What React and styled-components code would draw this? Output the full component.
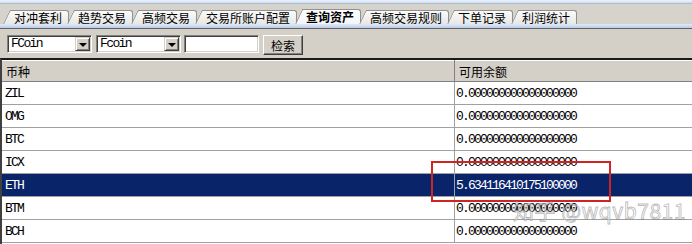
import React from "react";
import styled, { createGlobalStyle } from "styled-components";

const Global = createGlobalStyle`
  html, body { margin: 0; padding: 0; background: #d4d0c8; }
  body { font-family: "Noto Sans CJK SC", "Liberation Sans", sans-serif; font-size: 12px; color: #000; }
`;

const MONO = `"Liberation Mono", "Noto Sans CJK SC", monospace`;

const Frame = styled.div`
  position: relative;
  width: 692px;
  height: 244px;
  overflow: hidden;
  background: #d4d0c8;
  display: flex;
  flex-direction: column;
`;

const TopStrip = styled.div`
  height: 3px;
  background: linear-gradient(#eef3fb, #cfdcee);
  border-bottom: 1px solid #a9bcd8;
`;

const TabBar = styled.div`
  height: 20px;
  display: flex;
  align-items: flex-end;
  padding-left: 5px;
  background: #d6d2cc;
`;

const Tab = styled.div`
  position: relative;
  z-index: 0;
  box-sizing: border-box;
  height: ${(p) => (p.$active ? 15 : 14)}px;
  margin-left: 5px;
  padding: 0 6px 0 4px;
  display: flex;
  align-items: center;
  background: ${(p) => (p.$active ? "linear-gradient(#ffffff, #f3f5f9)" : "linear-gradient(#fbfbfb, #e7e7e5)")};
  border-top: 1px solid #8e9092;
  border-right: 1px solid #8e9092;
  border-top-right-radius: 3px;
  font-size: 12px;
  line-height: 12px;
  font-weight: ${(p) => (p.$active ? 700 : 400)};
  white-space: nowrap;

  &::before {
    content: "";
    position: absolute;
    z-index: -1;
    top: -1px;
    bottom: 0;
    left: -7px;
    width: 12px;
    background: inherit;
    border-top: 1px solid #8e9092;
    border-left: 1px solid #8e9092;
    border-top-left-radius: 2px;
    transform: skewX(-26deg);
    transform-origin: bottom left;
  }
`;

const TabBand = styled.div`
  height: 4px;
  background: linear-gradient(#e3ebf7, #b9cbe6);
  border-bottom: 1px solid #5f6368;
`;

const Toolbar = styled.div`
  height: 29px;
  box-sizing: border-box;
  padding: 6px 0 0 7px;
  display: flex;
  align-items: flex-start;
`;

const Sunken = styled.div`
  box-sizing: border-box;
  height: 18px;
  width: ${(p) => p.$w}px;
  margin-right: ${(p) => p.$gap || 0}px;
  background: #fff;
  border-top: 1px solid #808080;
  border-left: 1px solid #808080;
  border-bottom: 1px solid #ffffff;
  border-right: 1px solid #ffffff;
  box-shadow: inset 1px 1px 0 #404040, inset -1px -1px 0 #d4d0c8;
  display: flex;
  align-items: center;
  padding: 0 1px 0 3px;
`;

const ComboText = styled.span`
  flex: 1;
  font-family: ${MONO};
  font-size: 13px;
  letter-spacing: -1.6px;
  line-height: 14px;
`;

const DropButton = styled.div`
  box-sizing: border-box;
  width: 15px;
  height: 14px;
  background: #d4d0c8;
  border-top: 1px solid #d4d0c8;
  border-left: 1px solid #d4d0c8;
  border-bottom: 1px solid #404040;
  border-right: 1px solid #404040;
  box-shadow: inset 1px 1px 0 #ffffff, inset -1px -1px 0 #808080;
  display: flex;
  align-items: center;
  justify-content: center;

  &::after {
    content: "";
    width: 0;
    height: 0;
    border-left: 4px solid transparent;
    border-right: 4px solid transparent;
    border-top: 4px solid #000;
    margin-top: 1px;
  }
`;

const Button = styled.div`
  box-sizing: border-box;
  width: 40px;
  height: 20px;
  background: #d4d0c8;
  border-top: 1px solid #ffffff;
  border-left: 1px solid #ffffff;
  border-bottom: 1px solid #404040;
  border-right: 1px solid #404040;
  box-shadow: inset -1px -1px 0 #808080;
  display: flex;
  align-items: center;
  justify-content: center;
  font-size: 12px;
`;

const Grid = styled.div`
  flex: 1;
  background: #fff;
  border-top: 2px solid #1a1a1a;
  border-left: 2px solid #404040;
`;

const Row = styled.div`
  display: grid;
  grid-template-columns: 453px 1fr;
  height: ${(p) => (p.$header ? 22 : 23)}px;
  box-sizing: border-box;
  border-bottom: 1px solid ${(p) => (p.$header ? "#808080" : "#a0a0a0")};
  background: ${(p) => (p.$header ? "#d4d0c8" : p.$selected ? "#0a246a" : "#ffffff")};
  color: ${(p) => (p.$selected ? "#ffffff" : "#000000")};
  box-shadow: ${(p) => (p.$header ? "inset 0 1px 0 #ffffff" : "none")};
`;

const Cell = styled.div`
  display: flex;
  align-items: center;
  overflow: hidden;
  white-space: nowrap;
  padding-left: ${(p) => p.$pad}px;
  border-right: ${(p) => (p.$first ? `1px solid ${p.$header ? "#808080" : "#a0a0a0"}` : "none")};
  font-family: ${(p) => (p.$header ? `"Noto Sans CJK SC", sans-serif` : MONO)};
  font-size: ${(p) => (p.$header ? 12 : 13)}px;
  letter-spacing: ${(p) => (p.$header ? "0" : "-1.8px")};
  padding-top: ${(p) => (p.$header ? 1 : 0)}px;
`;

const Highlight = styled.div`
  position: absolute;
  left: 431px;
  top: 161px;
  width: 180px;
  height: 41px;
  box-sizing: border-box;
  border: 2px solid #d02424;
  pointer-events: none;
`;

const Watermark = styled.div`
  position: absolute;
  left: 513px;
  top: 197px;
  font-family: "Noto Sans CJK SC", "Liberation Sans", sans-serif;
  font-size: 21px;
  line-height: 26px;
  color: rgba(255, 255, 255, 0.55);
  -webkit-text-stroke: 0.8px rgba(120, 120, 120, 0.55);
  letter-spacing: 0.5px;
  white-space: nowrap;
  pointer-events: none;
`;

const tabs = ["对冲套利", "趋势交易", "高频交易", "交易所账户配置", "查询资产", "高频交易规则", "下单记录", "利润统计"];

const rows = [
  ["ZIL", "0.000000000000000000"],
  ["OMG", "0.000000000000000000"],
  ["BTC", "0.000000000000000000"],
  ["ICX", "0.000000000000000000"],
  ["ETH", "5.634116410175100000", true],
  ["BTM", "0.000000000000000000"],
  ["BCH", "0.000000000000000000"],
];

export default function App() {
  return (
    <>
      <Global />
      <Frame>
        <TopStrip />
        <TabBar>
          {tabs.map((t) => (
            <Tab key={t} $active={t === "查询资产"}>
              {t}
            </Tab>
          ))}
        </TabBar>
        <TabBand />
        <Toolbar>
          <Sunken $w={85} $gap={4}>
            <ComboText>FCoin</ComboText>
            <DropButton />
          </Sunken>
          <Sunken $w={85} $gap={3}>
            <ComboText>Fcoin</ComboText>
            <DropButton />
          </Sunken>
          <Sunken $w={75} $gap={4} />
          <Button>检索</Button>
        </Toolbar>
        <Grid>
          <Row $header>
            <Cell $header $first $pad={4}>币种</Cell>
            <Cell $header $pad={4}>可用余额</Cell>
          </Row>
          {rows.map(([coin, amt, sel]) => (
            <Row key={coin} $selected={sel}>
              <Cell $first $pad={3}>{coin}</Cell>
              <Cell $pad={1}>{amt}</Cell>
            </Row>
          ))}
        </Grid>
        <Highlight />
        <Watermark>知乎 @wqvb7811</Watermark>
      </Frame>
    </>
  );
}
